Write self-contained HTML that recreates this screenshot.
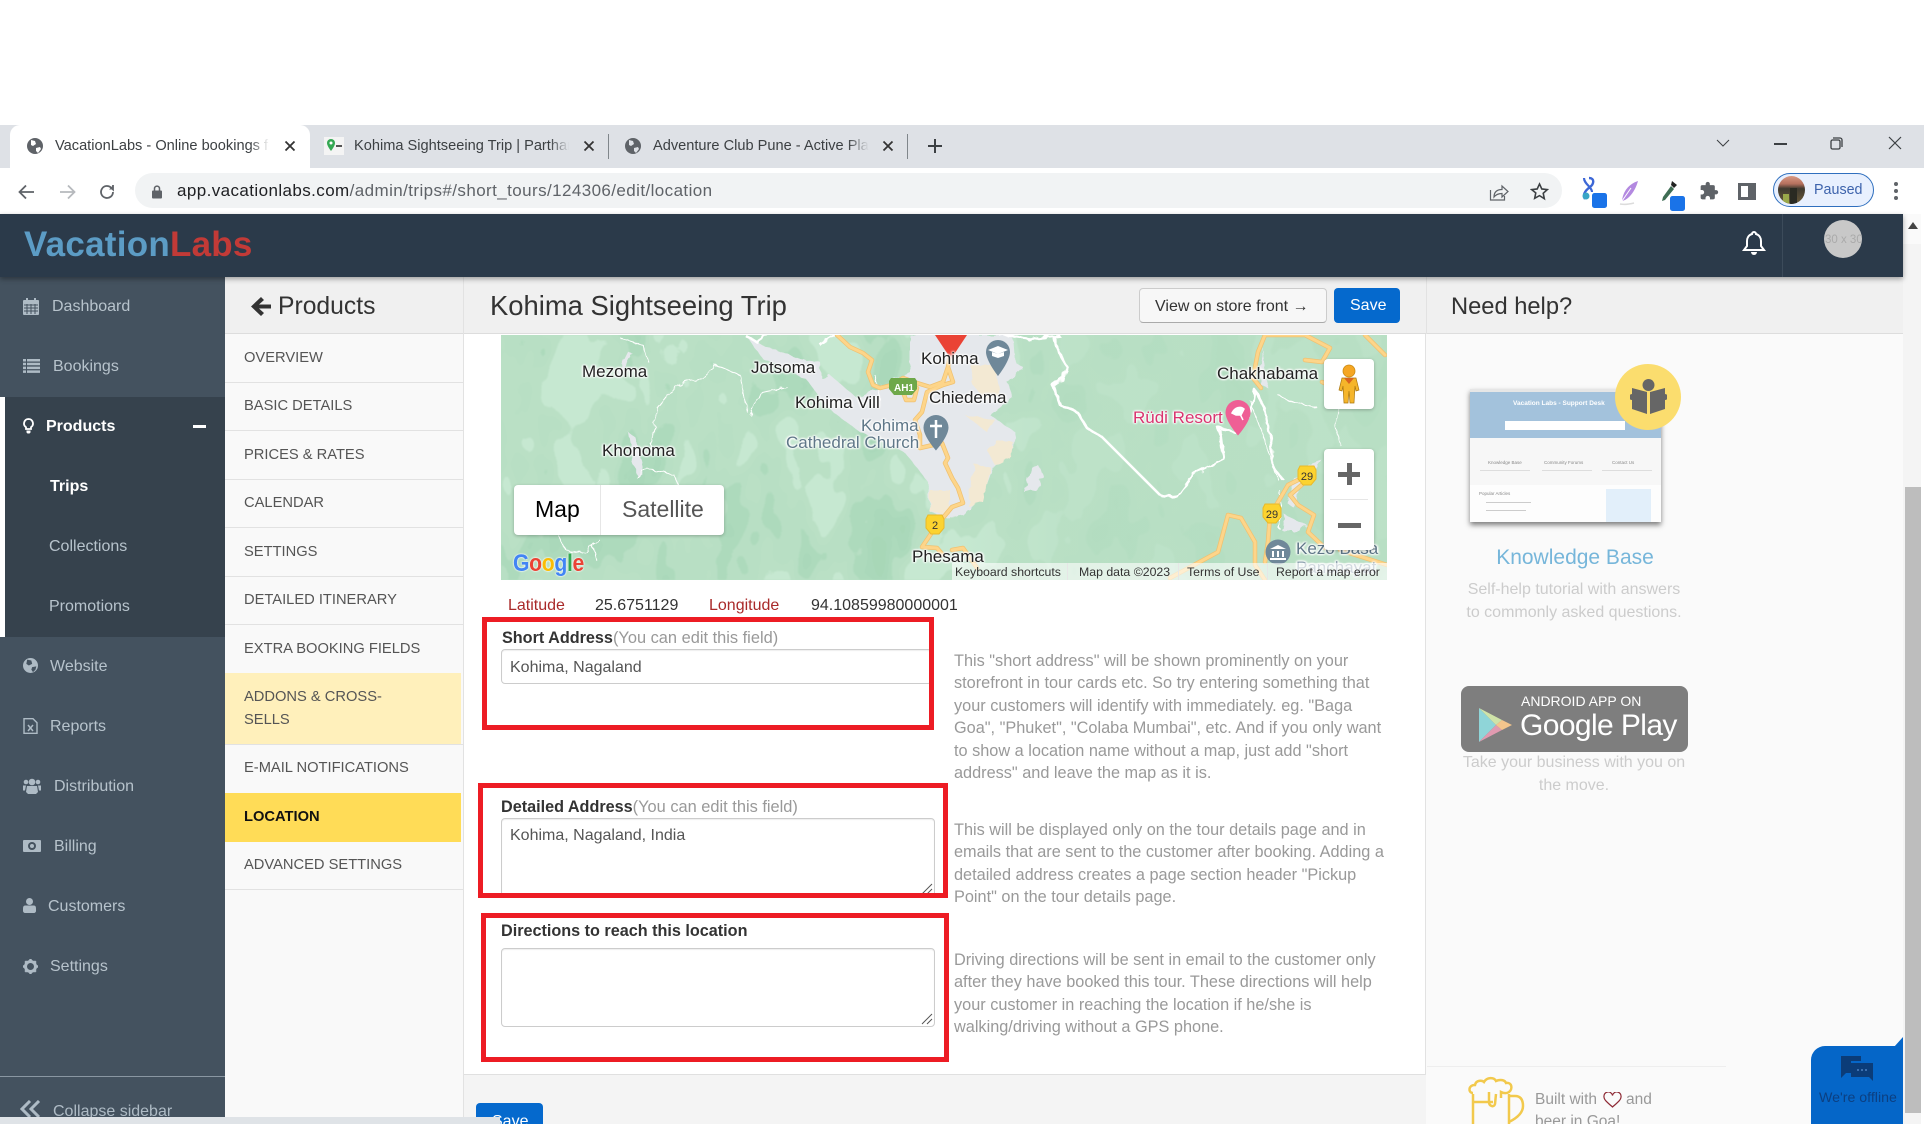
<!DOCTYPE html>
<html lang="en"><head><meta charset="utf-8"><title>Kohima Sightseeing Trip</title>
<style>
*{box-sizing:border-box}
html,body{margin:0;padding:0;background:#fff;width:1924px;height:1124px;overflow:hidden;font-family:"Liberation Sans",sans-serif}
#r{position:relative;width:1924px;height:1124px;overflow:hidden}
.a{position:absolute}
.t{position:absolute;white-space:nowrap;line-height:0}
.s{font-size:16px;color:#b7c3cc}
.n{font-size:14.7px;color:#555;left:244px}
.d{position:absolute;left:225px;width:238px;height:1px;background:#e2e2e2}
.h{font-size:16.3px;color:#999;left:954px}
.l{font-size:16.2px;color:#333;font-weight:bold}
.g{color:#999;font-weight:normal;font-size:16.4px}
.m{font-size:17px;color:#222;text-shadow:0 0 2px #fff,0 0 2px #fff,0 0 3px #fff,1px 0 2px #fff,-1px 0 2px #fff}
.f{font-size:12.3px;color:#333;top:572px}
.rb{position:absolute;border:5px solid #ed1c24}
.ip{position:absolute;background:#fff;border:1px solid #ccc;border-radius:4px;box-shadow:inset 0 1px 1px rgba(0,0,0,.07)}
.tb{font-size:14.6px;color:#3c4043;top:146px}
.sh{position:absolute;border-radius:4px}
</style></head><body><div id="r">

<!-- tab strip -->
<div class="a" style="left:0;top:125px;width:1924px;height:43px;background:#dee1e6"></div>
<div class="a" style="left:10px;top:125px;width:300px;height:43px;background:#fff;border-radius:10px 10px 0 0"></div>
<svg class="a" style="left:26px;top:137px" width="18" height="18" viewBox="0 0 18 18"><circle cx="9" cy="9" r="8" fill="#5f6368"/><path d="M5 3l4 1 1 3-3 2-2-1zM10 11l4-1 1 2-3 4-2-2z" fill="#fff"/></svg>
<div class="t tb" style="left:55px;width:216px;overflow:hidden;height:20px;line-height:20px;top:136px">VacationLabs - Online bookings for</div>
<div class="a" style="left:250px;top:134px;width:24px;height:24px;background:linear-gradient(90deg,rgba(255,255,255,0),#fff 80%)"></div>
<svg class="a" style="left:284px;top:140px" width="12" height="12" viewBox="0 0 12 12"><path d="M1.5 1.5l9 9M10.5 1.5l-9 9" stroke="#333" stroke-width="1.8"/></svg>
<svg class="a" style="left:324px;top:137px" width="20" height="18" viewBox="0 0 20 18"><rect width="20" height="18" fill="#f4f4f4"/><path d="M7 2a4 4 0 0 1 4 4c0 3-4 8-4 8S3 9 3 6a4 4 0 0 1 4-4z" fill="#34a853"/><circle cx="7" cy="6" r="1.5" fill="#fff"/><path d="M12 9h6" stroke="#555" stroke-width="2"/></svg>
<div class="t tb" style="left:354px;width:218px;overflow:hidden;height:20px;line-height:20px;top:136px">Kohima Sightseeing Trip | Parthan</div>
<div class="a" style="left:550px;top:134px;width:24px;height:24px;background:linear-gradient(90deg,rgba(222,225,230,0),#dee1e6 80%)"></div>
<svg class="a" style="left:583px;top:140px" width="12" height="12" viewBox="0 0 12 12"><path d="M1.5 1.5l9 9M10.5 1.5l-9 9" stroke="#333" stroke-width="1.8"/></svg>
<div class="a" style="left:608px;top:134px;width:1px;height:25px;background:#80868b"></div>
<svg class="a" style="left:624px;top:137px" width="18" height="18" viewBox="0 0 18 18"><circle cx="9" cy="9" r="8" fill="#5f6368"/><path d="M5 3l4 1 1 3-3 2-2-1zM10 11l4-1 1 2-3 4-2-2z" fill="#dee1e6"/></svg>
<div class="t tb" style="left:653px;width:218px;overflow:hidden;height:20px;line-height:20px;top:136px">Adventure Club Pune - Active Planet</div>
<div class="a" style="left:848px;top:134px;width:26px;height:24px;background:linear-gradient(90deg,rgba(222,225,230,0),#dee1e6 80%)"></div>
<svg class="a" style="left:882px;top:140px" width="12" height="12" viewBox="0 0 12 12"><path d="M1.5 1.5l9 9M10.5 1.5l-9 9" stroke="#333" stroke-width="1.8"/></svg>
<div class="a" style="left:907px;top:134px;width:1px;height:25px;background:#80868b"></div>
<svg class="a" style="left:928px;top:139px" width="14" height="14" viewBox="0 0 14 14"><path d="M7 0v14M0 7h14" stroke="#3c4043" stroke-width="2"/></svg>
<!-- window controls -->
<svg class="a" style="left:1716px;top:139px" width="14" height="8" viewBox="0 0 14 8"><path d="M1 1l6 6 6-6" stroke="#3c4043" fill="none"/></svg>
<div class="a" style="left:1774px;top:143px;width:13px;height:1.5px;background:#3c4043"></div>
<svg class="a" style="left:1830px;top:137px" width="13" height="13" viewBox="0 0 13 13"><rect x="1" y="3" width="9" height="9" rx="1.5" fill="none" stroke="#3c4043" stroke-width="1.3"/><path d="M3 1h7a2 2 0 0 1 2 2v7" fill="none" stroke="#3c4043" stroke-width="1.3"/></svg>
<svg class="a" style="left:1888px;top:136px" width="14" height="14" viewBox="0 0 14 14"><path d="M1 1l12 12M13 1L1 13" stroke="#3c4043" stroke-width="1.2"/></svg>

<!-- toolbar -->
<svg class="a" style="left:18px;top:184px" width="17" height="16" viewBox="0 0 17 16"><path d="M16 8H2M8 1.5L1.5 8 8 14.5" fill="none" stroke="#5f6368" stroke-width="1.8"/></svg>
<svg class="a" style="left:59px;top:184px" width="17" height="16" viewBox="0 0 17 16"><path d="M1 8h14M9 1.5L15.5 8 9 14.5" fill="none" stroke="#b6b9bd" stroke-width="1.8"/></svg>
<svg class="a" style="left:98px;top:183px" width="18" height="18" viewBox="0 0 18 18"><path d="M15 9a6 6 0 1 1-1.8-4.3L15 6.5V2" fill="none" stroke="#5f6368" stroke-width="1.8"/><path d="M11 6.500h4.500V2z" fill="#5f6368"/></svg>
<div class="a" style="left:135px;top:173px;width:1427px;height:35px;background:#f1f3f4;border-radius:18px"></div>
<svg class="a" style="left:152px;top:185px" width="10" height="14" viewBox="0 0 10 14"><rect y="5.500" width="10" height="8" rx="1" fill="#5f6368"/><path d="M2.500 6V3.600a2.500 2.500 0 0 1 5 0V6" fill="none" stroke="#5f6368" stroke-width="1.500"/></svg>
<div class="t" style="left:177px;top:191px;font-size:17px;letter-spacing:.41px;color:#5f6368"><span style="color:#202124">app.vacationlabs.com</span>/admin/trips#/short_tours/124306/edit/location</div>
<svg class="a" style="left:1489px;top:183px" width="20" height="18" viewBox="0 0 20 18"><path d="M1.500 7v10h14v-4" fill="none" stroke="#5f6368" stroke-width="1.200"/><path d="M5 14c0-5 3-7.500 8-7.500V3l6 5.500-6 5.500v-3.500c-4 0-6 1-8 3.500z" fill="none" stroke="#5f6368" stroke-width="1.200"/></svg>
<svg class="a" style="left:1530px;top:182px" width="19" height="19" viewBox="0 0 24 24"><path d="M12 2.500l2.900 6.300 6.900.8-5.100 4.700 1.400 6.800L12 17.200l-6.100 3.400 1.400-6.800L2.200 9.600l6.900-.8z" fill="none" stroke="#3c4043" stroke-width="2"/></svg>
<svg class="a" style="left:1580px;top:175px" width="28" height="34" viewBox="0 0 28 34"><path d="M9 3c6 0 5 6 1 9s-8 7-5 12" fill="none" stroke="#3d67d6" stroke-width="2.400"/><path d="M4 3c0 6 8 9 8 14" fill="none" stroke="#3d67d6" stroke-width="2.200"/><circle cx="6" cy="21" r="3.500" fill="#39a5c6"/><rect x="12" y="18" width="15" height="15" rx="2.500" fill="#1a73e8"/></svg>
<svg class="a" style="left:1617px;top:180px" width="24" height="26" viewBox="0 0 24 26"><path d="M21 1C12 4 6 11 5 21c6-1 13-9 16-20z" fill="#b389e0"/><path d="M5 21l9-13" stroke="#fff" stroke-width="1"/><path d="M3 24c5 1 10 0 14-1" stroke="#dcdcdc" stroke-width="1.500" fill="none"/></svg>
<svg class="a" style="left:1659px;top:179px" width="26" height="32" viewBox="0 0 26 32"><path d="M13 2l5 4-3 3-3-3z" fill="#222"/><path d="M12 7l3 3-9 11-3 1 1-4z" fill="#3f6d54"/><rect x="11" y="17" width="15" height="15" rx="2.500" fill="#1a73e8"/></svg>
<svg class="a" style="left:1699px;top:181px" width="20" height="20" viewBox="0 0 24 24"><path d="M20.500 11H19V7a2 2 0 0 0-2-2h-4V3.500a2.500 2.500 0 0 0-5 0V5H4a2 2 0 0 0-2 2v3.800h1.500a2.700 2.700 0 0 1 0 5.400H2V20a2 2 0 0 0 2 2h3.800v-1.500a2.700 2.700 0 0 1 5.400 0V22H17a2 2 0 0 0 2-2v-4h1.500a2.500 2.500 0 0 0 0-5z" fill="#5f6368"/></svg>
<div class="a" style="left:1738px;top:183px;width:18px;height:17px;border:3px solid #5f6368;border-right-width:8px"></div>
<div class="a" style="left:1773px;top:173px;width:101px;height:34px;border-radius:17px;background:#e8f0fe;border:1.500px solid #2f6fbe"></div>
<div class="a" style="left:1778px;top:176px;width:27px;height:28px;border-radius:50%;overflow:hidden;background:linear-gradient(180deg,#d99a84 0,#b5705e 28%,#3f3a30 45%,#6a5a38 100%)"><div class="a" style="left:12px;top:12px;width:7px;height:16px;background:#2a2a22"></div><div class="a" style="left:5px;top:18px;width:6px;height:10px;background:#9aa84a"></div></div>
<div class="t" style="left:1814px;top:190px;font-size:14.300px;color:#3d63ac">Paused</div>
<div class="a" style="left:1894px;top:182px;width:4px;height:4px;border-radius:50%;background:#5f6368"></div>
<div class="a" style="left:1894px;top:189px;width:4px;height:4px;border-radius:50%;background:#5f6368"></div>
<div class="a" style="left:1894px;top:196px;width:4px;height:4px;border-radius:50%;background:#5f6368"></div>

<!-- scrollbar -->
<div class="a" style="left:1903px;top:214px;width:21px;height:910px;background:#f4f4f4"></div>
<div class="a" style="left:1903px;top:214px;width:21px;height:30px;background:#fafafa"></div>
<div class="a" style="left:1921px;top:214px;width:3px;height:910px;background:#fff"></div>
<div class="a" style="left:1905px;top:487px;width:16px;height:626px;background:#bdbdbd"></div>
<svg class="a" style="left:1908px;top:222px" width="10" height="7"><path d="M5 0l5 7H0z" fill="#444"/></svg>

<!-- main backgrounds -->
<div class="a" style="left:225px;top:277px;width:238px;height:847px;background:#f9f9f9"></div>
<div class="a" style="left:463px;top:277px;width:1px;height:847px;background:#e2e2e2"></div>
<div class="a" style="left:464px;top:1074px;width:962px;height:50px;background:#f4f4f4"></div>
<div class="a" style="left:464px;top:1074px;width:962px;height:1px;background:#e0e0e0"></div>
<div class="a" style="left:1425px;top:277px;width:1px;height:798px;background:#e2e2e2"></div>
<div class="a" style="left:1426px;top:334px;width:477px;height:790px;background:#fafafa"></div>
<div class="a" style="left:225px;top:277px;width:1678px;height:57px;background:#f0f0f0;border-bottom:1px solid #ddd"></div>
<div class="a" style="left:463px;top:277px;width:1px;height:57px;background:#e2e2e2"></div>
<div class="a" style="left:1426px;top:277px;width:1px;height:57px;background:#e2e2e2"></div>

<!-- sidebar -->
<div class="a" style="left:0;top:277px;width:225px;height:847px;background:#44525f"></div>
<div class="a" style="left:0;top:397px;width:225px;height:240px;background:#36424d;border-left:5px solid #fff"></div>
<svg class="a" style="left:23px;top:298px" width="16" height="17" viewBox="0 0 16 17"><rect y="2" width="16" height="15" rx="1" fill="#aebbc5"/><path d="M4 0v4M12 0v4" stroke="#aebbc5" stroke-width="2"/><path d="M1 7h14M1 10h14M1 13h14M4 6v10M8 6v10M12 6v10" stroke="#44525f"/></svg>
<div class="t s" style="left:52px;top:307px">Dashboard</div>
<svg class="a" style="left:23px;top:359px" width="17" height="14" viewBox="0 0 17 14"><path d="M0 0h3v2.500H0zM4 0h13v2.500H4zM0 3.800h3v2.500H0zM4 3.800h13v2.500H4zM0 7.600h3v2.500H0zM4 7.600h13v2.500H4zM0 11.400h3v2.500H0zM4 11.400h13v2.500H4z" fill="#aebbc5"/></svg>
<div class="t s" style="left:53px;top:367px">Bookings</div>
<svg class="a" style="left:23px;top:418px" width="11" height="16" viewBox="0 0 11 16"><path d="M5.500 1a4.500 4.500 0 0 0-2.500 8.200V11h5V9.200A4.500 4.500 0 0 0 5.500 1z" fill="none" stroke="#fff" stroke-width="1.800"/><path d="M3.500 12.500h4v2l-1 1h-2l-1-1z" fill="#fff"/></svg>
<div class="t s" style="left:46px;top:427px;color:#fff;font-weight:bold">Products</div>
<div class="a" style="left:193px;top:425px;width:13px;height:3px;background:#fff"></div>
<div class="t s" style="left:50px;top:487px;color:#fff;font-weight:bold">Trips</div>
<div class="t s" style="left:49px;top:547px">Collections</div>
<div class="t s" style="left:49px;top:607px">Promotions</div>
<svg class="a" style="left:23px;top:658px" width="15" height="15" viewBox="0 0 18 18"><circle cx="9" cy="9" r="9" fill="#aebbc5"/><path d="M5 2l5 1 1 4-4 2-3-2zM11 11l5-1-1 4-3 3-2-3z" fill="#44525f"/></svg>
<div class="t s" style="left:50px;top:667px">Website</div>
<svg class="a" style="left:23px;top:718px" width="15" height="16" viewBox="0 0 15 16"><path d="M1 .7h9l4 4v10.600H1z" fill="none" stroke="#aebbc5" stroke-width="1.400"/><path d="M5 7l5 6M10 7l-5 6" stroke="#aebbc5" stroke-width="1.500"/></svg>
<div class="t s" style="left:50px;top:727px">Reports</div>
<svg class="a" style="left:23px;top:778px" width="18" height="16" viewBox="0 0 18 16"><circle cx="9" cy="4" r="3.300" fill="#aebbc5"/><circle cx="3" cy="4" r="2.300" fill="#aebbc5"/><circle cx="15" cy="4" r="2.300" fill="#aebbc5"/><path d="M4 8h10l1 6-2 2H5l-2-2zM0 7.500h3l-1 5H0zM18 7.500h-3l1 5h2z" fill="#aebbc5"/></svg>
<div class="t s" style="left:54px;top:787px">Distribution</div>
<svg class="a" style="left:23px;top:840px" width="18" height="12" viewBox="0 0 18 12"><rect width="18" height="12" rx="1" fill="#aebbc5"/><circle cx="9" cy="6" r="4" fill="#44525f"/><circle cx="9" cy="6" r="2" fill="#aebbc5"/></svg>
<div class="t s" style="left:54px;top:847px">Billing</div>
<svg class="a" style="left:23px;top:898px" width="13" height="15" viewBox="0 0 13 15"><circle cx="6.500" cy="3.500" r="3.500" fill="#aebbc5"/><path d="M2 7.500h9c1.300 0 2 1 2 3V13c0 1-1 2-2 2H2c-1 0-2-1-2-2v-2.500c0-2 .7-3 2-3z" fill="#aebbc5"/></svg>
<div class="t s" style="left:48px;top:907px">Customers</div>
<svg class="a" style="left:23px;top:959px" width="15" height="15" viewBox="0 0 15 15"><circle cx="7.500" cy="7.500" r="5" fill="none" stroke="#aebbc5" stroke-width="3"/><path d="M7.500 0v3M7.500 12v3M0 7.500h3M12 7.500h3M2.200 2.200l2 2M10.800 10.800l2 2M12.800 2.200l-2 2M4.200 10.800l-2 2" stroke="#aebbc5" stroke-width="2.400"/></svg>
<div class="t s" style="left:50px;top:967px">Settings</div>
<div class="a" style="left:0;top:1076px;width:225px;height:1px;background:#8a97a2"></div>
<svg class="a" style="left:20px;top:1100px" width="21" height="18" viewBox="0 0 21 18"><path d="M10 1L2 9l8 8M19 1l-8 8 8 8" fill="none" stroke="#aebbc5" stroke-width="3"/></svg>
<div class="t s" style="left:53px;top:1112px;font-size:16px;color:#aebbc5">Collapse sidebar</div>

<!-- second col -->
<svg class="a" style="left:251px;top:296px" width="20" height="21" viewBox="0 0 20 21"><path d="M10 1l3 3-5 4.500h12v4H8l5 4.500-3 3L0 10.500z" fill="#333"/></svg>
<div class="t" style="left:278px;top:307px;font-size:24.700px;color:#333">Products</div>
<div class="t n" style="top:358px">OVERVIEW</div><div class="d" style="top:382px"></div>
<div class="t n" style="top:406px">BASIC DETAILS</div><div class="d" style="top:430px"></div>
<div class="t n" style="top:455px">PRICES &amp; RATES</div><div class="d" style="top:479px"></div>
<div class="t n" style="top:503px">CALENDAR</div><div class="d" style="top:527px"></div>
<div class="t n" style="top:552px">SETTINGS</div><div class="d" style="top:576px"></div>
<div class="t n" style="top:600px">DETAILED ITINERARY</div><div class="d" style="top:624px"></div>
<div class="t n" style="top:649px">EXTRA BOOKING FIELDS</div>
<div class="a" style="left:225px;top:673px;width:236px;height:71px;background:#fff0bb"></div>
<div class="t n" style="top:697px">ADDONS &amp; CROSS-</div>
<div class="t n" style="top:720px">SELLS</div><div class="d" style="top:744px"></div>
<div class="t n" style="top:768px">E-MAIL NOTIFICATIONS</div>
<div class="a" style="left:225px;top:793px;width:236px;height:49px;background:#ffdc57"></div>
<div class="t n" style="top:817px;color:#111;font-weight:bold">LOCATION</div>
<div class="t n" style="top:865px">ADVANCED SETTINGS</div><div class="d" style="top:889px"></div>

<!-- title -->
<div class="t" style="left:490px;top:306px;font-size:27.400px;color:#333">Kohima Sightseeing Trip</div>
<div class="a" style="left:1139px;top:288px;width:188px;height:35px;background:#f7f7f7;border:1px solid #ccc;border-bottom-color:#aaa;border-radius:4px"></div>
<div class="t" style="left:1155px;top:307px;font-size:16px;color:#333">View on store front →</div>
<div class="a" style="left:1334px;top:288px;width:66px;height:35px;background:#0569cd;border-radius:4px"></div>
<div class="t" style="left:1350px;top:306px;font-size:16px;color:#fff">Save</div>
<div class="t" style="left:1451px;top:307px;font-size:23.700px;color:#333">Need help?</div>

<!-- main panel -->
<div class="a" style="left:464px;top:335px;width:961px;height:739px;background:#fff"></div>

<!-- map -->
<svg class="a" style="left:501px;top:335px" width="886" height="245" viewBox="501 335 886 245">
<defs>
<filter id="ter" x="0" y="0" width="100%" height="100%" color-interpolation-filters="sRGB">
<feTurbulence type="fractalNoise" baseFrequency=".02 .012" numOctaves="3" seed="11"/>
<feColorMatrix values="1 0 0 0 0 1 0 0 0 0 1 0 0 0 0 0 0 0 0 1"/>
<feComponentTransfer>
<feFuncR type="discrete" tableValues=".66 .66 .67 .68 .725 .73 .78 .78 .78 .78"/>
<feFuncG type="discrete" tableValues=".845 .845 .85 .855 .878 .88 .91 .91 .91 .91"/>
<feFuncB type="discrete" tableValues=".72 .72 .73 .74 .77 .775 .82 .82 .82 .82"/>
</feComponentTransfer>
<feGaussianBlur stdDeviation=".8"/>
</filter>
<filter id="jag" x="-5%" y="-5%" width="110%" height="110%">
<feTurbulence type="fractalNoise" baseFrequency=".12" numOctaves="2" seed="3" result="n"/>
<feDisplacementMap in="SourceGraphic" in2="n" scale="6"/>
</filter>
<linearGradient id="fade" x1="0" x2="1"><stop offset="0" stop-color="#b8dfc4" stop-opacity="0"/><stop offset=".25" stop-color="#b8dfc4" stop-opacity=".65"/><stop offset="1" stop-color="#b8dfc4" stop-opacity=".75"/></linearGradient>
</defs>
<rect x="501" y="335" width="886" height="245" fill="#b9e0c5"/>
<rect x="501" y="335" width="886" height="245" filter="url(#ter)"/>
<rect x="960" y="335" width="427" height="245" fill="url(#fade)"/>
<!-- towns -->
<g fill="#e5e8ec" filter="url(#jag)">
<path d="M910 335h103l2 27 8 5-16 15 6 16-23 17 25 17-2 16-20 20-10 27-20 20-16 3-17-6-2-30-21-27-10-7-37-16-27-20-13-14v-20l10-3 27 23 40-20 13-6z"/>
<path d="M748 338l15 7 40 15 17 2 2 38-15-20-20-10-25-12z"/>
<path d="M628 352l5 2-12 22-6 2z"/><path d="M628 432l8 6 8 35-6 5-5-15z"/><path d="M1030 470l8-5 6 12-8 12-12 3z"/>
<path d="M1261 345l4 30 4 14-8-4zM1294 480l8-2-8 30-6-4zM1285 515l22 10-7 6-18 0z"/>
<path d="M1308 465l14-5-10 15z"/>
</g>
<g fill="#f3e9d3" filter="url(#jag)">
<path d="M970 365l25 0 5 30-15 5-12-15zM965 415l30 5-8 12zM995 440l18 2-2 15-16 8-8-15zM975 465l16 2-8 35-15 4 2-25zM930 490l20 0 0 25-20-3z"/>
</g>
<!-- white borders -->
<g fill="none" stroke="#fff" stroke-linejoin="round" filter="url(#jag)">
<path stroke-width="2.600" d="M1053 335l7 20 8 13-5 10-10 7 7 20 17 7 10 16 16 10 17 17 17 17 23 23 17 2 17-23 30-15-3-24-3-8 16 5 17-20 4-22 10 19 7 40v16l10 14"/>
<path stroke-width="2.600" d="M745 335l12 7 10-7M835 335l-15 10M1000 335l30 4 30-4"/>
<path stroke-width="1" d="M650 452l7-44 13-16 13-9 20-6 14-12 23 10 7 37M620 338l23 7 5 17M750 415l10-22 27-6M637 478l10-10 27 7 6 13M514 496l30-7M558 535l8 15 20 3 8-10M1250 400l18 50 10 30M1280 490l0 40M1278 395l10 5 30 8M1340 400l-5 25 5 20M600 540l-8 5 4 15M880 400l-5-25"/>
</g>
<!-- roads -->
<g fill="none" stroke-linejoin="round" stroke-linecap="round">
<g stroke="#f0c170" stroke-width="4.500">
<path d="M837 335l13 12 13 6 9 7-4 12 5 13 7 3 12-3 11-7 14 5 13 4 13-5 5-15 2-12M948 367l5 15-10 3-16 7-5 20-7 8 5 15v13l22-5 6 15-3 5 7 15 6 10 5 15-11 4-15 18-15 22 15 1 6 7M952 550l11-2 10 14 4 6M903 392l3 8 8 0 3-12"/>
<path d="M1265 335l-7 17-5 26 8 10M1265 335h40l25 13-8 14-17-2M1322 382l13 6M1308 475l-20 10-10 17-8 13-2 27-3 20M1305 482l-15 13 8 10 16 10-6 17 17 16M1170 578l48-26 10-37 13 3 14 24v23l10 15M1340 550l47 15M1365 335l20 20"/>
</g>
<g stroke="#fdd58a" stroke-width="3">
<path d="M837 335l13 12 13 6 9 7-4 12 5 13 7 3 12-3 11-7 14 5 13 4 13-5 5-15 2-12M948 367l5 15-10 3-16 7-5 20-7 8 5 15v13l22-5 6 15-3 5 7 15 6 10 5 15-11 4-15 18-15 22 15 1 6 7M952 550l11-2 10 14 4 6M903 392l3 8 8 0 3-12"/>
<path d="M1265 335l-7 17-5 26 8 10M1265 335h40l25 13-8 14-17-2M1322 382l13 6M1308 475l-20 10-10 17-8 13-2 27-3 20M1305 482l-15 13 8 10 16 10-6 17 17 16M1170 578l48-26 10-37 13 3 14 24v23l10 15M1340 550l47 15M1365 335l20 20"/>
</g>
</g>
<!-- shields -->
<path d="M891 378h24l2 3v8l-5 6h-18l-5-6v-8z" fill="#6ea84a"/>
<path d="M928 515h14l2 4v9l-5 6h-8l-5-6v-9z" fill="#fcd32f" stroke="#e9b92a"/>
<path d="M1300 466h14l2 4v9l-5 6h-8l-5-6v-9z" fill="#fcd32f" stroke="#e9b92a"/>
<path d="M1265 504h14l2 4v9l-5 6h-8l-5-6v-9z" fill="#fcd32f" stroke="#e9b92a"/>
<text x="904" y="391" font-size="10" font-weight="bold" fill="#fff" text-anchor="middle" font-family="Liberation Sans">AH1</text>
<text x="935" y="529" font-size="11" fill="#333" text-anchor="middle" font-family="Liberation Sans">2</text>
<text x="1307" y="480" font-size="11" fill="#333" text-anchor="middle" font-family="Liberation Sans">29</text>
<text x="1272" y="518" font-size="11" fill="#333" text-anchor="middle" font-family="Liberation Sans">29</text>
<!-- pins -->
<path d="M935 335h32l-16 24z" fill="#ea4335"/>
<g fill="#6f8899">
<path d="M998 340a12 12 0 0 1 12 12c0 9-12 24-12 24s-12-15-12-24a12 12 0 0 1 12-12z"/>
<path d="M936 415a12.500 12.500 0 0 1 12.500 12.500c0 9-12.500 23-12.500 23s-12.500-14-12.500-23A12.500 12.500 0 0 1 936 415z"/>
<circle cx="1278" cy="552" r="12.500"/>
</g>
<path d="M998 346l10 4-10 4-10-4zM992 352v4l6 2 6-2v-4l-6 2z" fill="#fff"/>
<path d="M936 420v18M930 426h12" stroke="#fff" stroke-width="2.500"/>
<path d="M1270 549l8-4 8 4zM1272 551h2v6h-2zM1277 551h2v6h-2zM1282 551h2v6h-2zM1270 558h16v2h-16z" fill="#fff"/>
<path d="M1238 400a12.500 12.500 0 0 1 12.500 12.500c0 9-12.500 23-12.500 23s-12.500-14-12.500-23A12.500 12.500 0 0 1 1238 400z" fill="#ef5f95"/>
<path d="M1232 413c3-6 9-7 12-4l-3 6-5 0zM1240 414l3 6" stroke="#fff" stroke-width="1.500" fill="#fff"/>
</svg>
<div class="t m" style="left:582px;top:372px">Mezoma</div>
<div class="t m" style="left:751px;top:368px">Jotsoma</div>
<div class="t m" style="left:921px;top:359px">Kohima</div>
<div class="t m" style="left:795px;top:403px">Kohima Vill</div>
<div class="t m" style="left:929px;top:398px">Chiedema</div>
<div class="t m" style="left:861px;top:426px;color:#5f7788">Kohima</div>
<div class="t m" style="left:786px;top:443px;color:#5f7788">Cathedral Church</div>
<div class="t m" style="left:602px;top:451px">Khonoma</div>
<div class="t m" style="left:1217px;top:374px">Chakhabama</div>
<div class="t m" style="left:1133px;top:418px;color:#d9346f">Rüdi Resort</div>
<div class="t m" style="left:912px;top:557px">Phesama</div>
<div class="t m" style="left:1296px;top:549px;color:#5f7788">Kezo Basa</div>
<div class="t m" style="left:1296px;top:568px;color:#8fa3b0">Panchayat</div>
<!-- map controls -->
<div class="sh" style="left:514px;top:485px;width:210px;height:50px;background:#fff;box-shadow:0 1px 3px rgba(0,0,0,.25)"></div>
<div class="a" style="left:600px;top:485px;width:1px;height:50px;background:#e6e6e6"></div>
<div class="t" style="left:535px;top:509px;font-size:23px;color:#000">Map</div>
<div class="t" style="left:622px;top:509px;font-size:23px;color:#565656">Satellite</div>
<div class="t" style="left:513px;top:564px;font-size:24.500px;font-weight:bold;text-shadow:0 0 2px #fff,0 0 2px #fff;letter-spacing:-.4px;transform:scaleX(.865);transform-origin:0 0"><span style="color:#4285f4">G</span><span style="color:#ea4335">o</span><span style="color:#fbbc05">o</span><span style="color:#4285f4">g</span><span style="color:#34a853">l</span><span style="color:#ea4335">e</span></div>
<div class="sh" style="left:1324px;top:359px;width:50px;height:50px;background:#fff;box-shadow:0 1px 3px rgba(0,0,0,.25)"></div>
<svg class="a" style="left:1337px;top:364px" width="24" height="40" viewBox="0 0 24 40"><circle cx="12" cy="7" r="6" fill="#f5a623" stroke="#c98a12" stroke-width=".8"/><path d="M5 14h14l3 12-3 1-1-5-1 17h-4l-1-12-1 12H7L6 22l-1 5-3-1z" fill="#f5b52a" stroke="#a9760f" stroke-width=".7"/><path d="M7 14l5 6 5-6z" fill="#d9641e"/></svg>
<div class="sh" style="left:1324px;top:449px;width:50px;height:101px;background:#fff;box-shadow:0 1px 3px rgba(0,0,0,.25)"></div>
<div class="a" style="left:1330px;top:499px;width:38px;height:1px;background:#e6e6e6"></div>
<svg class="a" style="left:1338px;top:463px" width="22" height="22"><path d="M9 0h5v9h8v5h-8v8H9v-8H0V9h9z" fill="#666"/></svg>
<div class="a" style="left:1338px;top:523px;width:23px;height:5px;background:#666"></div>
<div class="a" style="left:952px;top:563px;width:435px;height:17px;background:rgba(255,255,255,.6)"></div>
<div class="a" style="left:1067px;top:563px;width:1px;height:17px;background:#e6e6e6"></div>
<div class="a" style="left:1178px;top:563px;width:1px;height:17px;background:#e6e6e6"></div>
<div class="a" style="left:1267px;top:563px;width:1px;height:17px;background:#e6e6e6"></div>
<div class="t f" style="left:955px">Keyboard shortcuts</div>
<div class="t f" style="left:1079px">Map data ©2023</div>
<div class="t f" style="left:1187px">Terms of Use</div>
<div class="t f" style="left:1276px">Report a map error</div>

<!-- lat/long -->
<div class="t" style="left:508px;top:606px;font-size:16px;color:#a92a2a">Latitude</div>
<div class="t" style="left:595px;top:606px;font-size:16px;color:#333">25.6751129</div>
<div class="t" style="left:709px;top:606px;font-size:16px;color:#a92a2a">Longitude</div>
<div class="t" style="left:811px;top:606px;font-size:16px;color:#333">94.10859980000001</div>

<!-- form -->
<div class="t l" style="left:502px;top:638px">Short Address<span class="g">(You can edit this field)</span></div>
<div class="ip" style="left:501px;top:649px;width:431px;height:35px"></div>
<div class="t" style="left:510px;top:668px;font-size:16px;color:#555">Kohima, Nagaland</div>
<div class="t l" style="left:501px;top:807px">Detailed Address<span class="g">(You can edit this field)</span></div>
<div class="ip" style="left:501px;top:818px;width:434px;height:80px"></div>
<div class="t" style="left:510px;top:836px;font-size:16px;color:#555">Kohima, Nagaland, India</div>
<svg class="a" style="left:921px;top:883px" width="12" height="12"><path d="M1 11L11 1M6 11l5-5" stroke="#555"/></svg>
<div class="t l" style="left:501px;top:931px">Directions to reach this location</div>
<div class="ip" style="left:501px;top:948px;width:434px;height:79px"></div>
<svg class="a" style="left:921px;top:1013px" width="12" height="12"><path d="M1 11L11 1M6 11l5-5" stroke="#555"/></svg>
<div class="rb" style="left:482px;top:617px;width:452px;height:113px"></div>
<div class="rb" style="left:478px;top:783px;width:470px;height:115px"></div>
<div class="rb" style="left:481px;top:913px;width:468px;height:149px"></div>

<!-- help text -->
<div class="t h" style="top:661px">This "short address" will be shown prominently on your</div>
<div class="t h" style="top:683px">storefront in tour cards etc. So try entering something that</div>
<div class="t h" style="top:706px">your customers will identify with immediately. eg. "Baga</div>
<div class="t h" style="top:728px">Goa", "Phuket", "Colaba Mumbai", etc. And if you only want</div>
<div class="t h" style="top:751px">to show a location name without a map, just add "short</div>
<div class="t h" style="top:773px">address" and leave the map as it is.</div>
<div class="t h" style="top:830px">This will be displayed only on the tour details page and in</div>
<div class="t h" style="top:852px">emails that are sent to the customer after booking. Adding a</div>
<div class="t h" style="top:875px">detailed address creates a page section header "Pickup</div>
<div class="t h" style="top:897px">Point" on the tour details page.</div>
<div class="t h" style="top:960px">Driving directions will be sent in email to the customer only</div>
<div class="t h" style="top:982px">after they have booked this tour. These directions will help</div>
<div class="t h" style="top:1005px">your customer in reaching the location if he/she is</div>
<div class="t h" style="top:1027px">walking/driving without a GPS phone.</div>

<!-- bottom save -->
<div class="a" style="left:476px;top:1103px;width:67px;height:30px;background:#0569cd;border-radius:4px"></div>
<div class="t" style="left:492px;top:1122px;font-size:16px;color:#fff">Save</div>
<div class="a" style="left:0;top:1117px;width:500px;height:7px;background:#dfe3e7"></div>

<!-- right panel -->
<div class="a" style="left:1470px;top:389px;width:191px;height:133px;background:#fdfdfd;box-shadow:0 3px 5px rgba(0,0,0,.5);overflow:hidden">
  <div class="a" style="left:0;top:0;width:191px;height:3px;background:#e6e6e6"></div>
  <div class="a" style="left:0;top:3px;width:191px;height:46px;background:#a3c2dc"></div>
  <div class="t" style="left:43px;top:15px;font-size:6.500px;color:#fff;font-weight:bold">Vacation Labs - Support Desk</div>
  <div class="a" style="left:35px;top:32px;width:120px;height:9px;background:#fff"></div>
  <div class="a" style="left:0;top:49px;width:191px;height:47px;background:#f7f7f7"></div>
  <div class="t" style="left:18px;top:74px;font-size:4.500px;color:#888">Knowledge Base</div>
  <div class="t" style="left:74px;top:74px;font-size:4.500px;color:#888">Community Forums</div>
  <div class="t" style="left:142px;top:74px;font-size:4.500px;color:#888">Contact Us</div>
  <div class="a" style="left:10px;top:81px;width:50px;height:1px;background:#ddd"></div>
  <div class="a" style="left:72px;top:81px;width:50px;height:1px;background:#ddd"></div>
  <div class="a" style="left:132px;top:81px;width:50px;height:1px;background:#ddd"></div>
  <div class="a" style="left:136px;top:100px;width:45px;height:33px;background:#e2effa"></div>
  <div class="t" style="left:9px;top:105px;font-size:4.500px;color:#888">Popular Articles</div>
  <div class="a" style="left:16px;top:113px;width:45px;height:1px;background:#ccc"></div>
  <div class="a" style="left:16px;top:121px;width:40px;height:1px;background:#ccc"></div>
</div>
<div class="a" style="left:1615px;top:364px;width:66px;height:66px;border-radius:50%;background:#fbdd6e"></div>
<svg class="a" style="left:1630px;top:379px" width="37" height="37" viewBox="0 0 37 37"><circle cx="18.500" cy="6" r="6" fill="#666"/><path d="M2 9l15 4v22L2 30zM35 9l-15 4v22l15-5z" fill="#666"/><circle cx="2" cy="18" r="3" fill="#666"/><circle cx="35" cy="18" r="3" fill="#666"/></svg>
<div class="t" style="left:1575px;top:558px;transform:translateX(-50%);font-size:21px;color:#76b6da">Knowledge Base</div>
<div class="t" style="left:1574px;top:590px;transform:translateX(-50%);font-size:16px;color:#ccc">Self-help tutorial with answers</div>
<div class="t" style="left:1574px;top:613px;transform:translateX(-50%);font-size:16px;color:#ccc">to commonly asked questions.</div>
<div class="a" style="left:1461px;top:686px;width:227px;height:66px;background:#7e7e7e;border-radius:8px"></div>
<svg class="a" style="left:1479px;top:708px" width="33" height="34" viewBox="0 0 33 34"><path d="M0 0l17 17L0 34z" fill="#8fd5d8"/><path d="M0 0l23 12-6 5z" fill="#cfe3a8"/><path d="M0 34l23-12-6-5z" fill="#e09ab0"/><path d="M23 12l10 5-10 5-6-5z" fill="#f3c58c"/></svg>
<div class="t" style="left:1521px;top:701px;font-size:14px;color:#fff">ANDROID APP ON</div>
<div class="t" style="left:1520px;top:726px;font-size:30px;color:#fff;letter-spacing:-.6px">Google Play</div>
<div class="t" style="left:1574px;top:763px;transform:translateX(-50%);font-size:16px;color:#ccc">Take your business with you on</div>
<div class="t" style="left:1574px;top:786px;transform:translateX(-50%);font-size:16px;color:#ccc">the move.</div>
<div class="a" style="left:1427px;top:1066px;width:299px;height:1px;background:#eee"></div>
<svg class="a" style="left:1467px;top:1076px" width="60" height="48" viewBox="0 0 60 48"><g fill="none" stroke="#f2c94c" stroke-width="2.500"><path d="M6 18v34M42 18v34M6 26h20M42 20h6c6 0 8 4 8 10 0 7-6 12-14 16"/><path d="M6 17c-5 0-5-8 2-8 1-5 7-5 9-3 3-5 10-5 12-1 4-2 9-1 10 2 6-1 7 6 3 9-3 2-6 1-8 0v6M22 16v10c0 4 5 6 6 2l1-10"/></g></svg>
<div class="t" style="left:1535px;top:1100px;font-size:15.500px;color:#999">Built with</div>
<svg class="a" style="left:1603px;top:1092px" width="19" height="16" viewBox="0 0 19 16"><path d="M9.500 15C5 11 1 8 1 5a4 4 0 0 1 8.500-1.500A4 4 0 0 1 18 5c0 3-4 6-8.500 10z" fill="none" stroke="#8e2a35" stroke-width="1.200"/></svg>
<div class="t" style="left:1626px;top:1100px;font-size:15.500px;color:#999">and</div>
<div class="t" style="left:1535px;top:1122px;font-size:15.500px;color:#999">beer in Goa!</div>

<!-- chat -->
<div class="a" style="left:1811px;top:1046px;width:92px;height:78px;background:#0566c8;border-radius:14px 0 0 0"></div>
<svg class="a" style="left:1894px;top:1037px" width="9" height="10"><path d="M9 0v10H0z" fill="#0566c8"/></svg>
<svg class="a" style="left:1840px;top:1055px" width="34" height="29" viewBox="0 0 34 29"><path d="M1 1h20v5H11v12H6l-5 5z" fill="#0b3c78"/><path d="M11 8h22v18l-4-4H11z" fill="#0b3c78"/><path d="M17 15h2M21 15h2M25 15h2" stroke="#4d80c0" stroke-width="1.500"/></svg>
<div class="t" style="left:1819px;top:1098px;font-size:14.200px;color:#0c3f80">We're offline</div>

<!-- top bar -->
<div class="a" style="left:0;top:214px;width:1903px;height:63px;background:#2b3a4a;box-shadow:0 2px 5px rgba(0,0,0,.35)"></div>
<div class="t" style="left:24px;top:245px;font-size:35px;font-weight:bold;letter-spacing:.25px;color:#5c9cc5">Vacation<span style="color:#c23a37">Labs</span></div>
<svg class="a" style="left:1742px;top:230px" width="24" height="26" viewBox="0 0 24 26"><path d="M12 2a2 2 0 0 1 2 2c3.500 1 5 4 5 7v5l3 4H2l3-4v-5c0-3 1.500-6 5-7a2 2 0 0 1 2-2z" fill="none" stroke="#fff" stroke-width="2"/><path d="M9 22a3 3 0 0 0 6 0z" fill="#fff"/></svg>
<div class="a" style="left:1782px;top:214px;width:1px;height:63px;background:#3c4b5a"></div>
<div class="a" style="left:1824px;top:220px;width:38px;height:38px;border-radius:50%;background:#c8c8c8;overflow:hidden"></div>
<div class="t" style="left:1825px;top:240px;width:36px;overflow:hidden;height:14px;line-height:14px;margin-top:-7px;font-size:11.500px;color:#aaa;text-align:center">30 x 30</div>
</div></body></html>
